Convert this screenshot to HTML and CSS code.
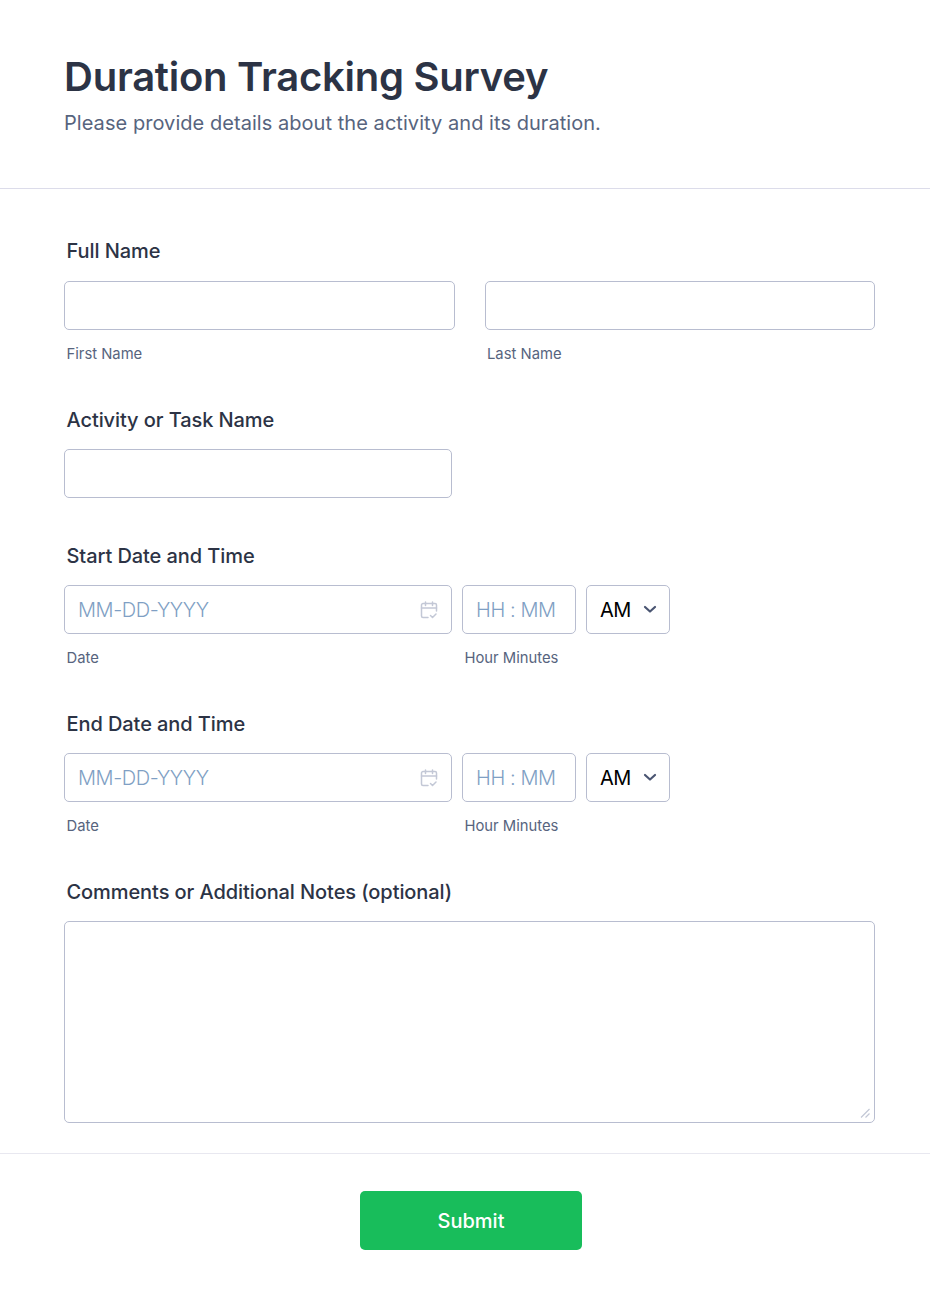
FILE: index.html
```html
<!DOCTYPE html>
<html lang="en">
<head>
    <meta charset="UTF-8">
    <meta name="viewport" content="width=device-width, initial-scale=1.0">
    <title>Duration Tracking Survey</title>
    <link rel="stylesheet" href="styles.css">
</head>
<body>
    <form class="form-card">
        <header class="form-header">
            <h1>Duration Tracking Survey</h1>
            <p>Please provide details about the activity and its duration.</p>
        </header>

        <div class="form-body">
            <div class="field field-name">
                <label class="field-label">Full Name</label>
                <div class="name-row">
                    <div class="name-col">
                        <input type="text" class="text-input">
                        <span class="sublabel">First Name</span>
                    </div>
                    <div class="name-col">
                        <input type="text" class="text-input">
                        <span class="sublabel">Last Name</span>
                    </div>
                </div>
            </div>

            <div class="field field-activity">
                <label class="field-label">Activity or Task Name</label>
                <input type="text" class="text-input input-wide">
            </div>

            <div class="field field-date">
                <label class="field-label">Start Date and Time</label>
                <div class="date-row">
                    <div class="date-col">
                        <div class="date-box">
                            <span class="placeholder">MM-DD-YYYY</span>
                            <svg class="cal-icon" width="18" height="18" viewBox="0 0 18 18" fill="none" stroke="#c3c8d6" stroke-width="1.5" stroke-linecap="round" stroke-linejoin="round">
                                <path d="M8 16.500H3A1.500 1.500 0 0 1 1.500 15V4A1.500 1.500 0 0 1 3 2.500h12A1.500 1.500 0 0 1 16.500 4V10"/>
                                <path d="M1.500 7h15M5.500 1v3.500M12.500 1v3.500"/>
                                <path d="M10.500 14.500l2 2 3.500-3.500"/>
                            </svg>
                        </div>
                        <span class="sublabel">Date</span>
                    </div>
                    <div class="time-col">
                        <div class="time-controls">
                            <div class="time-box"><span class="placeholder">HH : MM</span></div>
                            <div class="ampm-box">
                                <span>AM</span>
                                <svg width="14" height="9" viewBox="0 0 14 9" fill="none" stroke="#4a5572" stroke-width="2.200" stroke-linecap="round" stroke-linejoin="round"><path d="M2 2l5 4.500L12 2"/></svg>
                            </div>
                        </div>
                        <span class="sublabel">Hour Minutes</span>
                    </div>
                </div>
            </div>

            <div class="field field-date">
                <label class="field-label">End Date and Time</label>
                <div class="date-row">
                    <div class="date-col">
                        <div class="date-box">
                            <span class="placeholder">MM-DD-YYYY</span>
                            <svg class="cal-icon" width="18" height="18" viewBox="0 0 18 18" fill="none" stroke="#c3c8d6" stroke-width="1.5" stroke-linecap="round" stroke-linejoin="round">
                                <path d="M8 16.500H3A1.500 1.500 0 0 1 1.500 15V4A1.500 1.500 0 0 1 3 2.500h12A1.500 1.500 0 0 1 16.500 4V10"/>
                                <path d="M1.500 7h15M5.500 1v3.500M12.500 1v3.500"/>
                                <path d="M10.500 14.500l2 2 3.500-3.500"/>
                            </svg>
                        </div>
                        <span class="sublabel">Date</span>
                    </div>
                    <div class="time-col">
                        <div class="time-controls">
                            <div class="time-box"><span class="placeholder">HH : MM</span></div>
                            <div class="ampm-box">
                                <span>AM</span>
                                <svg width="14" height="9" viewBox="0 0 14 9" fill="none" stroke="#4a5572" stroke-width="2.200" stroke-linecap="round" stroke-linejoin="round"><path d="M2 2l5 4.500L12 2"/></svg>
                            </div>
                        </div>
                        <span class="sublabel">Hour Minutes</span>
                    </div>
                </div>
            </div>

            <div class="field">
                <label class="field-label">Comments or Additional Notes (optional)</label>
                <div class="notes-wrap">
                    <textarea class="notes"></textarea>
                    <svg class="resize-grip" width="10" height="10" viewBox="0 0 10 10" fill="none" stroke="#c3c8d6" stroke-width="1.200"><path d="M1 9.500L9.500 1M5.500 9.500L9.500 5.500"/></svg>
                </div>
            </div>
        </div>

        <footer class="form-footer">
            <button type="button" class="submit-btn">Submit</button>
        </footer>
    </form>
</body>
</html>
```

FILE: styles.css
```css
* {
    box-sizing: border-box;
}

body {
    margin: 0;
    background-color: #ffffff;
    font-family: Inter, "Liberation Sans", sans-serif;
}

.form-card {
    height: 1300px;
    background: #ffffff;
}

.form-header {
    height: 189px;
    padding: 51px 64px 0;
    border-bottom: 1px solid #dcdcea;
}

h1 {
    margin: 0;
    font-size: 40px;
    line-height: 52px;
    font-weight: 600;
    letter-spacing: -0.25px;
    color: #2c3345;
}

.form-header p {
    margin: 8px 0 0;
    font-size: 20px;
    line-height: 24px;
    letter-spacing: 0.05px;
    color: #57647e;
}

.form-body {
    padding: 50px 55px 0 64px;
}

.field-label {
    display: block;
    padding-left: 2.5px;
    margin-bottom: 17px;
    font-size: 20px;
    line-height: 24px;
    font-weight: 500;
    letter-spacing: -0.08px;
    color: #2c3345;
}

.field-name {
    margin-bottom: 45px;
}

.field-name .field-label {
    margin-bottom: 18px;
}

.field-activity {
    margin-bottom: 46px;
}

.field-date {
    margin-bottom: 45px;
}

.name-row {
    display: flex;
    gap: 30px;
}

.name-col {
    flex: 1;
}

.text-input,
.date-box,
.time-box,
.ampm-box,
.notes {
    height: 49px;
    border: 1px solid #b8bdd0;
    border-radius: 5px;
    background: #ffffff;
}

.text-input {
    display: block;
    width: 100%;
}

.input-wide {
    width: 388px;
}

.sublabel {
    display: block;
    margin-top: 15px;
    padding-left: 2.5px;
    font-size: 14.8px;
    line-height: 18px;
    color: #57647e;
}

.date-row {
    display: flex;
    gap: 10px;
}

.date-col {
    width: 388px;
}

.date-box {
    display: flex;
    align-items: center;
    justify-content: space-between;
    padding: 0 13px;
}

.placeholder {
    font-size: 20px;
    font-weight: 300;
    letter-spacing: -0.4px;
    color: #7f9fc4;
}

.time-controls {
    display: flex;
    gap: 10px;
}

.time-box {
    display: flex;
    align-items: center;
    width: 114px;
    padding-left: 13px;
}

.ampm-box {
    display: flex;
    align-items: center;
    justify-content: space-between;
    width: 84px;
    padding: 0 12px 0 13px;
    font-size: 20px;
    letter-spacing: -0.45px;
    color: #000000;
}

.notes-wrap {
    position: relative;
    width: 811px;
}

.notes {
    display: block;
    width: 811px;
    height: 202px;
    resize: none;
}

.resize-grip {
    position: absolute;
    right: 5px;
    bottom: 5px;
}

.form-footer {
    display: flex;
    justify-content: center;
    margin-top: 30px;
    padding: 37px 0 0 12px;
    border-top: 1px solid #e8e8f0;
}

.submit-btn {
    width: 222px;
    height: 59px;
    border: none;
    border-radius: 5px;
    background-color: #18bd5b;
    color: #ffffff;
    font-family: inherit;
    font-size: 20px;
    font-weight: 500;
}
```
